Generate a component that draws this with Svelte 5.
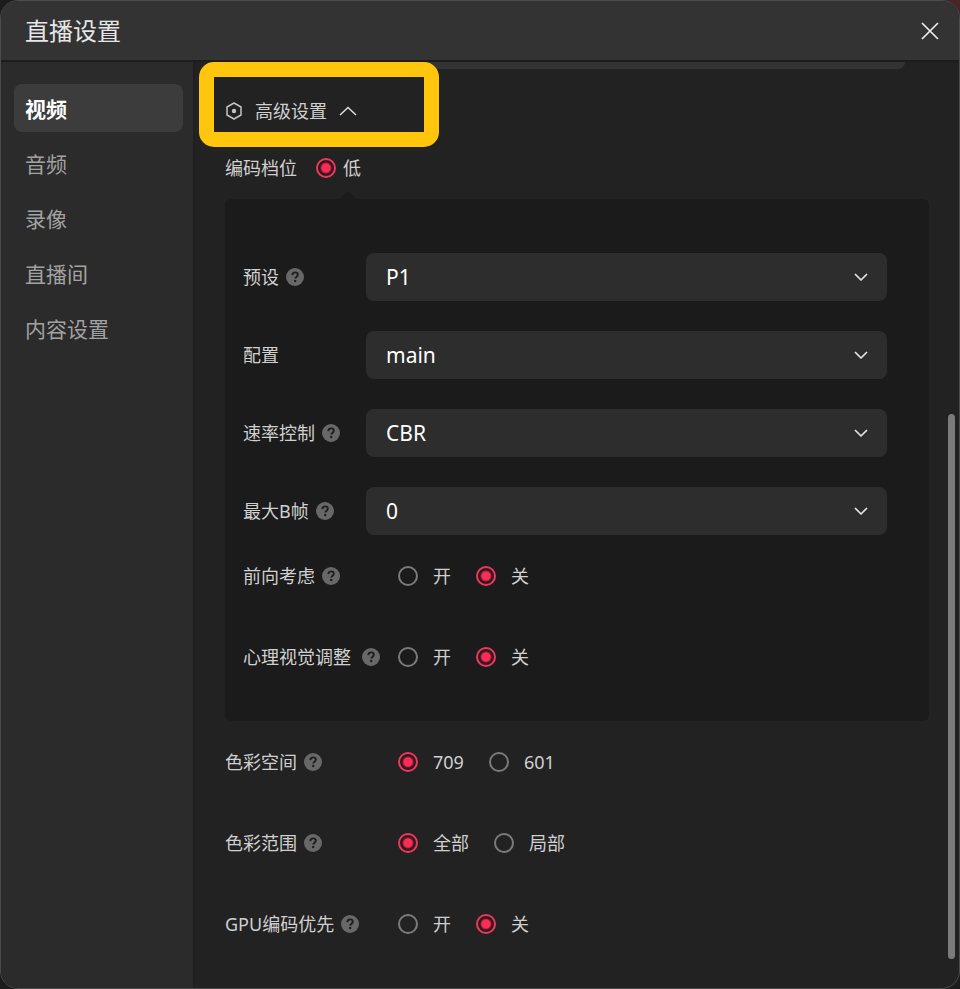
<script>
  const tabs = ["视频", "音频", "录像", "直播间", "内容设置"];
  let activeTab = $state("视频");
  let advancedOpen = $state(true);
  let level = $state("低");

  // Encoder drop-downs
  let selects = $state([
    { id: "preset", label: "预设", help: true, value: "P1", options: ["P1", "P2", "P3", "P4", "P5", "P6", "P7"] },
    { id: "profile", label: "配置", help: false, value: "main", options: ["main", "high", "baseline"] },
    { id: "rate", label: "速率控制", help: true, value: "CBR", options: ["CBR", "VBR", "CQP"] },
    { id: "bframes", label: "最大B帧", help: true, value: "0", options: ["0", "1", "2", "3", "4"] },
  ]);

  // Encoder switches inside the panel
  let switches = $state([
    { id: "lookahead", label: "前向考虑", value: "关", options: ["开", "关"] },
    { id: "psycho", label: "心理视觉调整", value: "关", options: ["开", "关"], wide: true },
  ]);

  // General switches below the panel
  let general = $state([
    { id: "space", label: "色彩空间", value: "709", options: ["709", "601"] },
    { id: "range", label: "色彩范围", value: "全部", options: ["全部", "局部"] },
    { id: "gpu", label: "GPU编码优先", value: "关", options: ["开", "关"] },
  ]);

  const choose = (item, option) => {
    item.value = option;
  };
</script>

{#snippet help()}
  <svg class="help" viewBox="0 0 18 18" aria-hidden="true">
    <circle cx="9" cy="9" r="9" fill="#686868" />
    <path d="M6.3 7.1C6.4 5.3 7.5 4.4 9.1 4.4c1.6 0 2.7.9 2.7 2.3 0 1.9-2.5 2-2.5 3.9" fill="none" stroke="#1e1e1e" stroke-width="1.9" />
    <circle cx="9.2" cy="13" r="1.2" fill="#1e1e1e" />
  </svg>
{/snippet}

{#snippet radioRow(item)}
  <div class="row" role="radiogroup" aria-labelledby="{item.id}-label">
    <span class="label" class:wide={item.wide} id="{item.id}-label">{item.label}{@render help()}</span>
    <div class="options">
      {#each item.options as option}
        <label class="option">
          <input
            type="radio"
            name={item.id}
            value={option}
            checked={item.value === option}
            onchange={() => choose(item, option)}
          />
          {option}
        </label>
      {/each}
    </div>
  </div>
{/snippet}

<div class="window">
  <header>
    <h1>直播设置</h1>
    <button class="close" aria-label="关闭">
      <svg width="18" height="18" viewBox="0 0 18 18">
        <path d="M1 1l16 16M17 1L1 17" fill="none" stroke="#eee" stroke-width="1.7" />
      </svg>
    </button>
  </header>

  <div class="body">
    <nav>
      {#each tabs as tab}
        <button class="tab" class:active={tab === activeTab} onclick={() => (activeTab = tab)}>{tab}</button>
      {/each}
    </nav>

    <main>
      <div class="clipped"></div>

      <div class="advanced">
        <button class="toggle" aria-expanded={advancedOpen} onclick={() => (advancedOpen = !advancedOpen)}>
          <svg width="18" height="18" viewBox="0 0 18 18">
            <path d="M9 1l7 4v8l-7 4-7-4V5z" fill="none" stroke="#c4c4c4" stroke-width="1.5" stroke-linejoin="round" />
            <circle cx="9" cy="9" r="2.2" fill="#c4c4c4" />
          </svg>
          <span>高级设置</span>
          <svg class="arrow" class:closed={!advancedOpen} width="18" height="10" viewBox="0 0 18 10">
            <path d="M1 9l8-7.500 8 7.500" fill="none" stroke="#ddd" stroke-width="1.5" />
          </svg>
        </button>
        <div class="highlight"></div>
      </div>

      {#if advancedOpen}
        <div class="level" role="radiogroup" aria-labelledby="level-label">
          <span id="level-label">编码档位</span>
          <label class="option near">
            <input type="radio" name="level" value="低" bind:group={level} />
            低
          </label>
        </div>

        <section class="panel">
          <div class="selects">
            {#each selects as item}
              <div class="row">
                <label class="label" for={item.id}>
                  {item.label}{#if item.help}{@render help()}{/if}
                </label>
                <div class="select">
                  <select id={item.id} bind:value={item.value}>
                    {#each item.options as option}
                      <option>{option}</option>
                    {/each}
                  </select>
                  <svg width="14" height="9" viewBox="0 0 14 9" aria-hidden="true">
                    <path d="M1 1l6 6 6-6" fill="none" stroke="#e4e4e4" stroke-width="1.7" stroke-linejoin="round" />
                  </svg>
                </div>
              </div>
            {/each}
          </div>
          <div class="switches">
            {#each switches as item}
              {@render radioRow(item)}
            {/each}
          </div>
        </section>

        <div class="switches general">
          {#each general as item}
            {@render radioRow(item)}
          {/each}
        </div>
      {/if}

      <div class="scrollbar"></div>
    </main>
  </div>
</div>

<style>
  :global(body) {
    background: linear-gradient(to bottom left, #4a2529, #1c1c1c 10%);
  }
  .window {
    box-sizing: border-box;
    min-height: 100vh;
    display: flex;
    flex-direction: column;
    border: 1px solid #4c4c4c;
    border-radius: 18px;
    overflow: hidden;
    background: #222;
    color: #d0d0d0;
    font-family: "Noto Sans", "Noto Sans CJK SC", sans-serif;
    font-size: 18px;
    line-height: 24px;
  }
  button,
  select {
    border: 0;
    margin: 0;
    font-family: inherit;
    color: inherit;
    cursor: pointer;
  }
  svg {
    display: block;
    flex-shrink: 0;
  }
  header {
    box-sizing: border-box;
    height: 61px;
    padding: 0 20px 0 24px;
    display: flex;
    align-items: center;
    justify-content: space-between;
    background: #333;
    border-bottom: 2px solid #1d1d1d;
  }
  h1 {
    margin: 0;
    font-size: 24px;
    font-weight: 400;
    line-height: 32px;
    color: #e6e6e6;
  }
  .close {
    padding: 0;
    background: none;
  }
  .body {
    flex: 1;
    display: flex;
  }
  nav {
    box-sizing: border-box;
    width: 194px;
    flex-shrink: 0;
    padding: 22px 10px 22px 13px;
    display: flex;
    flex-direction: column;
    gap: 7px;
    background: #2b2b2b;
    border-right: 2px solid #1f1f1f;
  }
  .tab {
    height: 48px;
    padding: 0 11px;
    border-radius: 8px;
    background: none;
    color: #a2a2a2;
    font-size: 21px;
    text-align: left;
  }
  .tab.active {
    background: #3c3c3c;
    color: #fff;
    font-weight: 700;
  }
  main {
    position: relative;
    flex: 1;
    min-width: 0;
    padding: 0 30px 40px;
  }
  .clipped {
    height: 7px;
    margin: 0 24px 0 140px;
    border-radius: 0 0 8px 8px;
    background: #333;
  }
  .advanced {
    position: relative;
    display: flex;
    align-items: center;
    height: 56px;
    margin-top: 14px;
  }
  .toggle {
    display: flex;
    align-items: center;
    padding: 0;
    gap: 12px;
    background: none;
    font-size: 18px;
    line-height: 24px;
  }
  .arrow.closed {
    transform: rotate(180deg);
  }
  .highlight {
    position: absolute;
    left: -26px;
    top: -21px;
    width: 210px;
    height: 55px;
    border: 15px solid #ffc60d;
    border-radius: 15px;
    pointer-events: none;
  }
  .level {
    display: flex;
    align-items: center;
    gap: 19px;
    height: 58px;
    margin-bottom: 2px;
  }
  .panel {
    position: relative;
    padding: 54px 42px 40px 18px;
    border-radius: 6px;
    background: #1b1b1b;
  }
  .panel::before {
    content: "";
    position: absolute;
    left: 115px;
    top: -8px;
    border: 8px solid transparent;
    border-top: 0;
    border-bottom-color: #1b1b1b;
  }
  .selects {
    display: flex;
    flex-direction: column;
    gap: 30px;
  }
  .switches {
    display: flex;
    flex-direction: column;
    gap: 33px;
    margin-top: 17px;
  }
  .row {
    display: flex;
    align-items: center;
    height: 48px;
  }
  .label {
    display: flex;
    align-items: center;
    gap: 7px;
    width: 123px;
    flex-shrink: 0;
    white-space: nowrap;
  }
  .switches .label {
    width: 155px;
  }
  .general .label {
    width: 173px;
  }
  .label.wide {
    gap: 11px;
  }
  .help {
    width: 18px;
    height: 18px;
  }
  .options {
    display: flex;
    gap: 25px;
  }
  .option {
    display: flex;
    align-items: center;
    gap: 15px;
    cursor: pointer;
  }
  .option.near {
    gap: 7px;
  }
  input[type="radio"] {
    appearance: none;
    box-sizing: border-box;
    width: 20px;
    height: 20px;
    margin: 0;
    border: 2px solid #7b7b7b;
    border-radius: 50%;
  }
  input[type="radio"]:checked {
    border-color: #e93a5b;
    background: radial-gradient(circle, #fe2c55 4px, #341820 6px);
  }
  .select {
    position: relative;
    flex: 1;
  }
  .select select {
    display: block;
    appearance: none;
    width: 100%;
    height: 48px;
    padding: 0 48px 0 20px;
    border-radius: 8px;
    background: #2d2d2d;
    color: #fff;
    font-size: 21px;
  }
  .select svg {
    position: absolute;
    right: 19px;
    top: 20px;
    pointer-events: none;
  }
  .scrollbar {
    position: absolute;
    right: 4px;
    top: 38%;
    bottom: 29px;
    width: 7px;
    border-radius: 4px;
    background: #7b7b7b;
  }
</style>
